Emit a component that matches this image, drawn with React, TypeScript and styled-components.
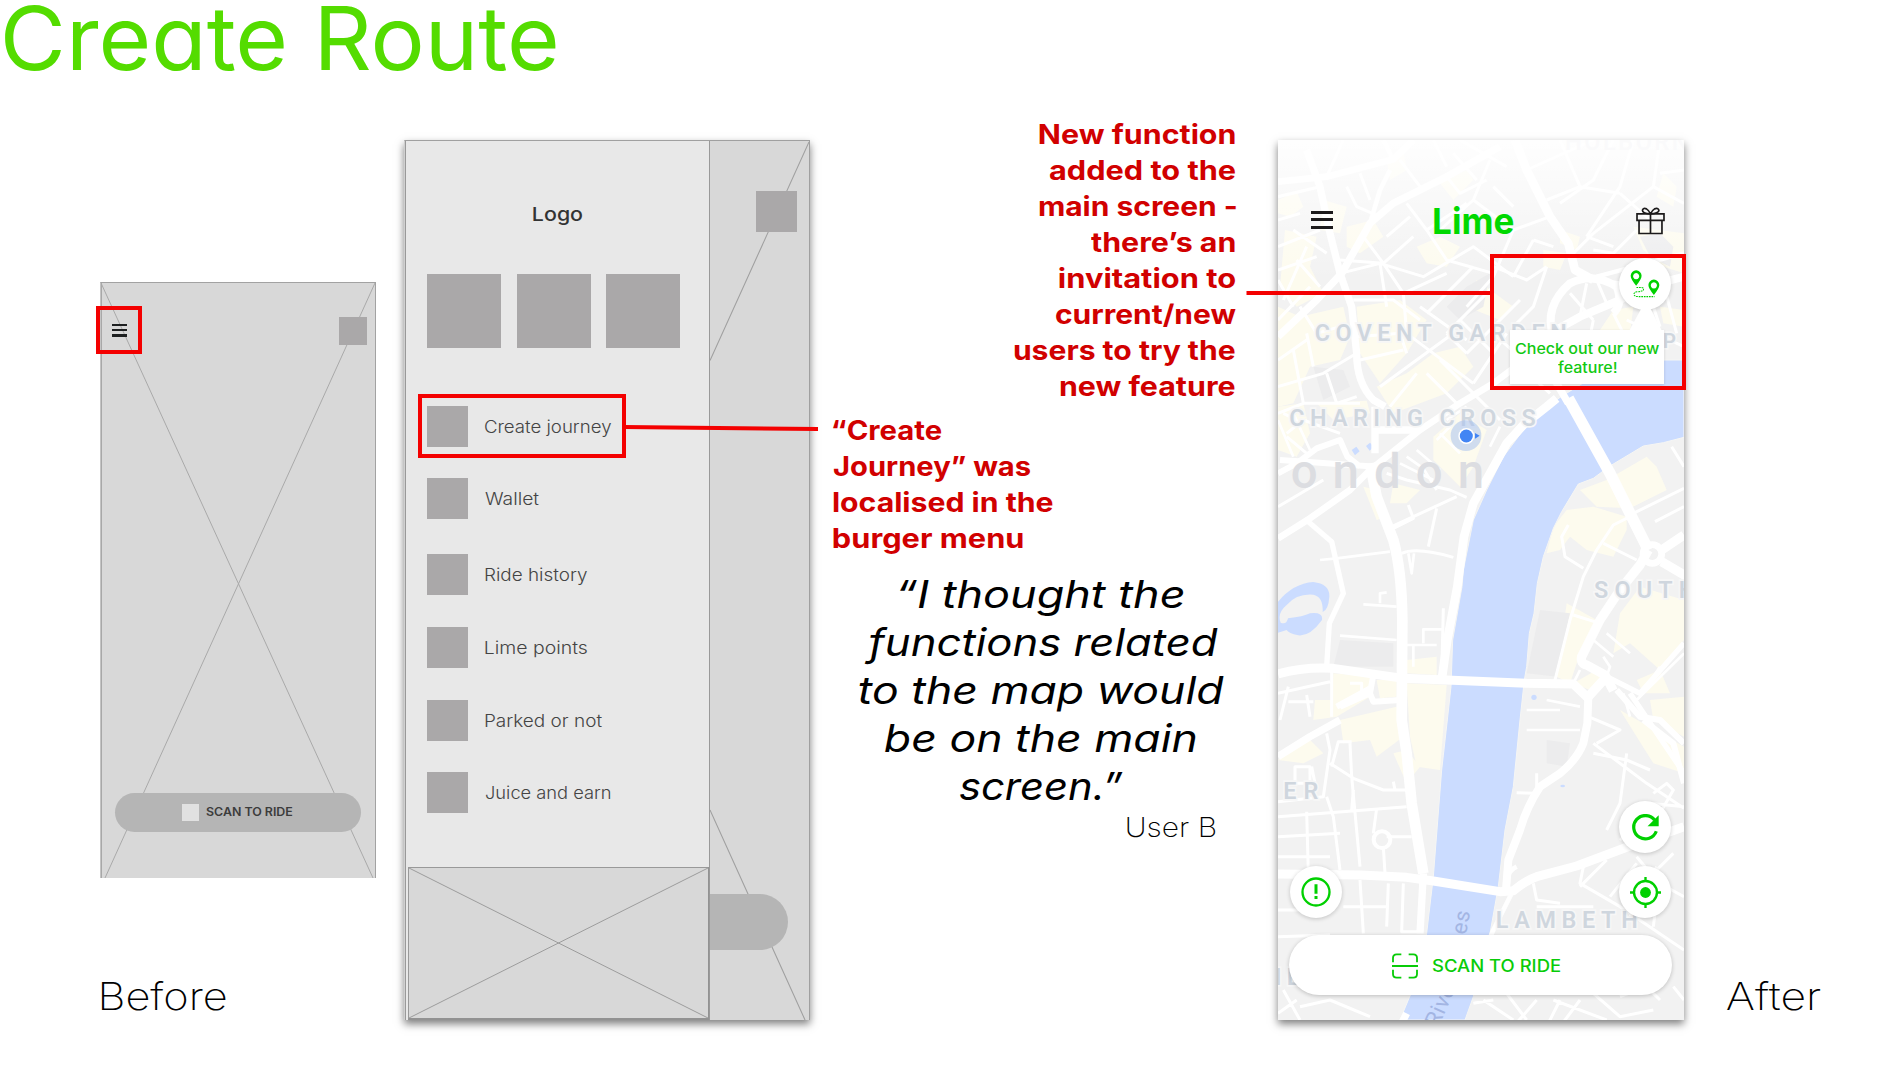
import React, { ReactNode, useLayoutEffect, useRef } from "react";
import styled, { createGlobalStyle } from "styled-components";

const RED = "#f40000";
const TEXT_RED = "#d10000";
const GREEN = "#00d000";
const LINE = "#a2a2a2";

const Global = createGlobalStyle`
  *, *::before, *::after { box-sizing: border-box; }
  body {
    margin: 0;
    background: #fff;
    font-family: Inter, "Open Sans", "Liberation Sans", sans-serif;
    overflow: hidden;
  }
`;

/* ---------- text set to an exact measure ---------- */

const Measure = styled.span<{ $w: number }>`
  display: block;
  flex: none;
  width: ${(p) => p.$w}px;
  white-space: nowrap;
`;

const Stretch = styled.span`
  display: inline-block;
  transform-origin: 0 50%;
`;

function Fit({ w, children }: { w: number; children: string }) {
  const ref = useRef<HTMLSpanElement>(null);
  useLayoutEffect(() => {
    const el = ref.current;
    if (!el) return;
    const cs = getComputedStyle(el);
    const ctx = document.createElement("canvas").getContext("2d");
    if (!ctx) return;
    ctx.font = `${cs.fontStyle} ${cs.fontWeight} ${cs.fontSize} ${cs.fontFamily}`;
    const m = ctx.measureText(children);
    const ink = m.actualBoundingBoxLeft + m.actualBoundingBoxRight;
    el.style.transform = `scaleX(${w / ink}) translateX(${m.actualBoundingBoxLeft}px)`;
  }, [w, children]);
  return (
    <Measure $w={w}>
      <Stretch ref={ref}>{children}</Stretch>
    </Measure>
  );
}

/* ---------- page frame ---------- */

const Page = styled.main`
  position: relative;
  width: 1900px;
  height: 1080px;
  display: flex;
  flex-direction: column;
  background: #fff;
  overflow: hidden;
`;

const Header = styled.header`
  height: 140px;
  flex: none;
  padding-left: 5px;
`;

const Title = styled.h1`
  margin: 0;
  font-size: 88px;
  line-height: 76px;
  font-weight: 400;
  color: #54dc00;
  font-feature-settings: "cv11", "ss03";
`;

const Stage = styled.div`
  display: flex;
  align-items: flex-start;
  height: 940px;
`;

const BeforeColumn = styled.section`
  width: 404px;
  padding: 142px 28px 0 100px;
`;

const Caption = styled.div`
  font-size: 38.5px;
  line-height: 48px;
  font-weight: 200;
  color: #000;
`;

const BeforeCaption = styled(Caption)`
  margin-top: 94px;
  padding-left: 2px;
`;

const AfterCaption = styled(Caption)`
  margin: 832px 0 0 43px;
`;

/* ---------- small wireframe ---------- */

const Wire = styled.div`
  position: relative;
  width: 276px;
  height: 596px;
  background: #d8d8d8;
  border-top: 1px solid ${LINE};
  border-right: 1px solid ${LINE};
  border-left: 1px solid #c4c4c4;
  box-shadow: inset 1px 0 0 #a8a8a8;
  display: flex;
  flex-direction: column;
  justify-content: space-between;
  padding: 34px 8px 46.5px 11px;
`;

const Cross = styled.svg`
  position: absolute;
  inset: 0;
  width: 100%;
  height: 100%;
`;

const WireTop = styled.div`
  position: relative;
  display: flex;
  justify-content: space-between;
  align-items: center;
`;

const Bars = styled.div<{ $w: number; $t: number; $gap: number; $c: string }>`
  width: ${(p) => p.$w}px;
  display: flex;
  flex-direction: column;
  gap: ${(p) => p.$gap}px;
  margin-bottom: 1.5px;
  &::before, &::after, i { content: ""; display: block; height: ${(p) => p.$t}px; background: ${(p) => p.$c}; }
`;

const Square = styled.div<{ $s: number; $c?: string }>`
  flex: none;
  width: ${(p) => p.$s}px;
  height: ${(p) => p.$s}px;
  background: ${(p) => p.$c || "#aaa8a9"};
`;

const WirePill = styled.div`
  position: relative;
  width: 246px;
  height: 38.5px;
  margin-left: 3px;
  border-radius: 20px;
  background: #b5b5b5;
  display: flex;
  align-items: center;
  padding-left: 67px;
  gap: 7px;
  font-size: 11.3px;
  line-height: 16px;
  font-weight: 600;
  color: #3c3c3c;
`;

function SmallWireframe() {
  return (
    <Wire>
      <Cross viewBox="0 0 274 595" preserveAspectRatio="none">
        <path d="M0 0L272 595M274 0L4 595" stroke="#a9a9a9" strokeWidth="1" fill="none" />
      </Cross>
      <WireTop>
        <Bars $w={15} $t={2.2} $gap={3} $c="#1d1f20"><i /></Bars>
        <Square $s={28} />
      </WireTop>
      <WirePill>
        <Square $s={16.5} $c="#e1e1e1" />
        <Fit w={87}>SCAN TO RIDE</Fit>
      </WirePill>
    </Wire>
  );
}

/* ---------- menu wireframe ---------- */

const Frame = styled.section`
  position: relative;
  flex: none;
  width: 406px;
  height: 880px;
  display: flex;
  box-shadow: 0 4px 8px rgba(0, 0, 0, 0.5);
`;

const MenuFrame = styled(Frame)`
  background: #d8d8d8;
  border-top: 1px solid #a0a0a0;
  border-right: 1px solid #a0a0a0;
  border-left: 1px solid #d0d0d0;
`;

const Drawer = styled.div`
  width: 305px;
  border-left: 1px solid #999;
  border-right: 1px solid #999;
  background: #e8e8e8;
  display: flex;
  flex-direction: column;
`;

const DrawerLogo = styled.div`
  padding: 62px 0 0 126.500px;
  height: 133.3px;
  font-size: 19px;
  line-height: 24px;
  font-weight: 550;
  color: #333;
`;

const Tiles = styled.div`
  display: flex;
  gap: 15.7px;
  padding-left: 21px;
  height: 131.5px;
`;

const MenuRow = styled.div<{ $h: number }>`
  display: flex;
  align-items: flex-start;
  gap: 17px;
  padding-left: 21px;
  height: ${(p) => p.$h}px;
  font-size: 17px;
  line-height: 42px;
  font-weight: 350;
  color: #444;
`;

const Placeholder = styled.div`
  position: relative;
  height: 153px;
  margin: auto 0 0 2px;
  border: 1px solid #999;
  border-bottom: 2px solid #929292;
  border-right: 1px solid #929292;
  background: #d8d8d8;
`;

const Peek = styled.div`
  position: relative;
  flex: 1;
  display: flex;
  flex-direction: column;
  justify-content: space-between;
  align-items: flex-start;
  padding: 50px 0 70px;
`;

const PeekSquare = styled(Square)`
  position: relative;
  margin-left: 46px;
`;

const PeekPill = styled.div`
  position: relative;
  width: 78px;
  height: 56px;
  border-radius: 0 28px 28px 0;
  background: #b5b5b5;
`;

const MENU: [string, number, number][] = [
  ["Create journey", 126, 72.7],
  ["Wallet", 54, 76],
  ["Ride history", 102, 72.5],
  ["Lime points", 102, 72.7],
  ["Parked or not", 117, 72.5],
  ["Juice and earn", 125.5, 41],
];

function MenuWireframe() {
  return (
    <MenuFrame>
      <Drawer>
        <DrawerLogo><Fit w={49.5}>Logo</Fit></DrawerLogo>
        <Tiles>
          <Square $s={74} /><Square $s={74} /><Square $s={74} />
        </Tiles>
        {MENU.map(([label, w, h]) => (
          <MenuRow key={label} $h={h}>
            <Square $s={41} />
            <Fit w={w}>{label}</Fit>
          </MenuRow>
        ))}
        <Placeholder>
          <Cross viewBox="0 0 300 150" preserveAspectRatio="none">
            <path d="M0 0L300 150M300 0L0 150" stroke="#9c9c9c" fill="none" />
          </Cross>
        </Placeholder>
      </Drawer>
      <Peek>
        <Cross viewBox="0 0 100 879" preserveAspectRatio="none">
          <path d="M100 1L0 219.5M0 669L96 879" stroke="#a0a0a0" strokeWidth="1.1" fill="none" />
        </Cross>
        <PeekSquare $s={41} />
        <PeekPill />
      </Peek>
    </MenuFrame>
  );
}

/* ---------- notes ---------- */

const Notes = styled.section`
  width: 468px;
  flex: none;
  padding-left: 22px;
  display: flex;
  flex-direction: column;
  color: ${TEXT_RED};
`;

const Note = styled.div<{ $end?: boolean }>`
  width: 403.5px;
  display: flex;
  flex-direction: column;
  align-items: ${(p) => (p.$end ? "flex-end" : "flex-start")};
  font-size: 27px;
  line-height: 36px;
  font-weight: 700;
`;

const NewNote = styled(Note)`
  margin-top: -23px;
`;

const OldNote = styled(Note)`
  margin: 8px 0 0 1px;
`;

const Quote = styled.blockquote`
  margin: 12.5px 0 0 19px;
  width: 380px;
  display: flex;
  flex-direction: column;
  align-items: center;
  font-size: 38.5px;
  line-height: 48px;
  font-style: italic;
  font-weight: 450;
  color: #000;
  font-feature-settings: "cv11";
`;

const Author = styled.div`
  margin: 0 0 0 294.5px;
  font-size: 27px;
  line-height: 36px;
  font-weight: 200;
  color: #000;
`;

/* ---------- map screen ---------- */

const Phone = styled(Frame)`
  flex-direction: column;
  background: #f2f2f2;
`;

const MapArt = styled.svg`
  position: absolute;
  inset: 0;
  width: 406px;
  height: 880px;
`;

const TopBar = styled.div`
  position: relative;
  display: flex;
  align-items: center;
  padding: 65px 19px 0 32.5px;
  height: 96px;
`;

const Brand = styled.div`
  margin: 0 auto 0 101px;
  font-size: 36px;
  line-height: 30px;
  font-weight: 650;
  color: #00d800;
`;

const Round = styled.div`
  position: relative;
  flex: none;
  width: 52px;
  height: 52px;
  border-radius: 50%;
  background: #fff;
  box-shadow: 0 1px 4px rgba(0, 0, 0, 0.2);
  display: flex;
  align-items: center;
  justify-content: center;
`;

const Feature = styled.div`
  position: relative;
  display: flex;
  flex-direction: column;
  align-items: flex-end;
  padding: 22px 13px 0 0;
`;

const Tooltip = styled.div`
  position: relative;
  width: 154px;
  height: 54px;
  margin: 20px 7px 0 0;
  background: #fff;
  box-shadow: 0 1px 3px rgba(0, 0, 0, 0.14);
  display: flex;
  flex-direction: column;
  align-items: center;
  padding-top: 9px;
  font-size: 15px;
  line-height: 19.3px;
  font-weight: 450;
  color: #12c912;
  &::before {
    content: "";
    position: absolute;
    right: 2px;
    top: -30px;
    border-left: 17px solid transparent;
    border-right: 16px solid transparent;
    border-bottom: 31px solid #fff;
  }
`;

const Controls = styled.div`
  position: relative;
  margin-top: auto;
  padding: 0 13px 17px 12px;
  display: flex;
  justify-content: space-between;
  align-items: flex-end;
`;

const Stack = styled.div`
  display: flex;
  flex-direction: column;
  gap: 13px;
`;

const ScanButton = styled.div`
  position: relative;
  width: 383px;
  height: 60px;
  margin: 0 0 25px 11px;
  border-radius: 30px;
  background: #fff;
  box-shadow: 0 1px 4px rgba(0, 0, 0, 0.22);
  display: flex;
  align-items: center;
  gap: 14px;
  padding: 1px 0 0 103px;
  font-size: 16.6px;
  line-height: 24px;
  font-weight: 550;
  color: #08cc08;
`;

const YELLOW = [
  "M54 240L110 215 130 260 90 290 54 280Z",
  "M75 330L170 350 150 440 190 520 110 560 60 500Z",
  "M190 240L260 260 240 340 180 330Z",
  "M260 320L340 300 370 350 300 400 260 380Z",
  "M54 560L120 590 250 560 270 650 240 720 150 740 100 850 54 860Z",
  "M290 560L420 540 500 600 440 700 360 790 300 700Z",
  "M350 800L440 760 520 700 600 680 640 740 560 820 400 880Z",
  "M470 380L540 350 600 380 560 440 500 430Z",
  "M540 190L620 150 640 180 580 240Z",
  "M650 480L760 560 720 600 620 560Z",
  "M850 390L920 400 900 450 850 440Z",
  "M900 330L960 350 950 390 900 370Z",
  "M1060 570L1120 560 1110 640 1020 630Z",
  "M1200 560L1272 570V620L1210 610Z",
  "M1120 320L1272 340V460L1210 440 1150 390Z",
  "M1210 160L1250 200 1240 260 1190 230Z",
  "M380 120L430 90 440 150 390 180Z",
  "M54 860L130 850 150 940 110 1010 54 990Z",
  "M170 850L320 842 330 880 220 900Z",
  "M520 950L600 880 680 930 640 1040 600 1100 520 1020Z",
  "M310 1100L350 1110 380 1190 350 1200Z",
  "M400 1090L480 1110 440 1150 390 1150Z",
  "M960 1110L1040 1080 1160 1010 1190 1040 1220 1110 1110 1165 1010 1160Z",
  "M920 1170L1000 1160 1100 1190 1100 1230 1060 1310 980 1290 930 1250 900 1290 860 1300 880 1220Z",
  "M1140 1400L1272 1440V1560L1200 1650 1110 1570 1060 1600 1080 1480Z",
  "M920 1450L1010 1500 960 1600 930 1690 890 1670Z",
  "M840 1490L905 1500V1520L840 1510ZM840 1525L900 1535V1550L840 1540ZM830 1605L870 1610V1640L830 1635Z",
  "M220 1660L330 1670 330 1730 230 1790 160 1800 165 1740 215 1740Z",
  "M350 1680L410 1680V1730L360 1735Z",
  "M440 1620L530 1610V1665L440 1660Z",
  "M440 1690L560 1695 540 1950 470 1940 450 1850Z",
  "M240 1800L410 1760 430 1850 350 1910 330 1860 250 1870Z",
  "M54 1920L150 1860 190 1900 130 1930Z",
  "M400 1900L440 1890 480 1940 440 1990Z",
  "M1130 1680L1200 1650 1230 1720 1150 1720Z",
  "M1080 1770L1272 1880V1960L1180 1930 1130 1850Z",
  "M1170 1740L1272 1730V1850L1180 1800Z",
  "M940 1690L1010 1650 1030 1690 990 1710Z",
];

const GREY = [
  "M620 500L690 460 670 560 600 600 560 560Z",
  "M1140 350L1200 340 1240 380 1230 440 1170 410Z",
  "M240 1560L400 1570 400 1640 220 1640Z",
  "M840 1470L930 1480 890 1670 800 1660Z",
  "M860 1860L930 1870 920 1940 860 1930Z",
  "M160 740L250 750 270 800 190 840Z",
];

const RIVER =
  "M828 885L903 830L1000 770L1212 720H1272V952L1210 968L1150 978L1050 1038L1000 1075L955 1092L905 1175L880 1225L850 1310L832 1390L822 1480L808 1540L800 1640L793 1680L780 1800L760 2000L735 2130L715 2300L690 2440L640 2630L615 2700H420L455 2615L500 2440L520 2270L545 1950L562 1800L573 1700L578 1560L606 1400L610 1350L640 1200L680 1110L730 1010L790 930Z";

const ROADS: [number, string][] = [
  [26, "M890 835L860 860 790 915 740 970 690 1060 640 1150 612 1250 592 1400 562 1560 545 1680"],
  [34, "M925 835L1050 1060 1165 1290"],
  [22, "M925 850L890 790 850 730"],
  [27, "M54 1662Q130 1640 220 1645L430 1675 800 1690 940 1692 985 1735"],
  [27, "M54 2262L300 2265 440 2272 520 2283 720 2315 760 2312Q800 2280 830 2270L950 2238 1100 2182 1272 2120"],
  [32, "M330 1030L350 1130 400 1260Q425 1350 427 1500L425 1800 440 1900 455 2050 490 2260"],
  [22, "M490 2260L480 2440M440 2680L410 2740"],
  [28, "M1165 1290L1140 1335 1080 1410 1020 1500 965 1610Q960 1630 980 1635L1035 1665 1060 1712"],
  [24, "M985 1730L982 1810 970 1870Q950 1920 900 1960L840 2000Q800 2060 780 2130L745 2220 738 2310"],
  [28, "M1205 1290L1272 1245M1205 1325L1290 1375M985 1730L1040 1670"],
  [20, "M54 1255L150 1195 270 1110 330 1050 480 930 600 850 700 790 780 730 900 620"],
  [18, "M54 1060L110 1030 170 985 240 960 262 1010 300 1040M60 1020L350 1040"],
  [16, "M145 1205L215 1265 250 1420 208 1510 200 1640"],
  [22, "M345 860V1000M345 930L480 930"],
  [20, "M54 185L200 170 400 118 460 60"],
  [26, "M765 60L800 150 870 290 925 370 945 450 1000 480"],
  [22, "M140 90L180 200 210 340 240 460 275 560 290 700Q290 790 340 840L375 860"],
  [22, "M54 650L170 540 245 460 330 310 400 250 560 170 720 80"],
  [24, "M880 650Q850 560 930 490Q1000 455 1070 500Q1090 550 1060 580"],
  [24, "M760 745L870 640 960 590 1080 540 1160 500 1272 470"],
  [13, "M990 480L1080 490M1010 470L1272 400"],
  [14, "M330 310L360 210 390 150M400 120L370 60"],
  [16, "M1040 1670L1140 1720 1272 1570M1110 1720L1272 1960"],
  [18, "M1272 1870L1200 1800 1140 1790 1070 1710M1150 1800L1240 1870 1272 1990"],
  [22, "M54 1910L150 1850 240 1800"],
  [18, "M240 1760L330 1720 340 1665M330 1720L340 1745 420 1740M230 1760L330 1705"],
  [14, "M760 2310L700 2430 670 2500M770 2240Q730 2260 745 2310"],
];

const MINOR: [number, string][] = [
  [9, "M620 1132L570 1110 440 1080 380 1060M395 1220L590 1130M400 1225L460 1195 445 1155M530 1165L505 1280M425 1300Q470 1280 580 1312"],
  [8, "M180 1320L230 1315 390 1295M240 1547L410 1560M310 1453L410 1460M360 1450V1420L380 1417M490 1570V1528H550M440 1575H530M460 1575V1640M445 1300L455 1360 462 1300"],
  [9, "M545 1670L550 1465M1030 1270L1130 1320M1110 1190L1060 1215 1010 1290 970 1370 930 1500 885 1680M940 1485L1020 1510M970 1345L915 1310 905 1250 925 1215M1100 1190L1272 1105M1185 1205L1272 1160M1235 980L1272 1040"],
  [9, "M54 1720L210 1685M85 1700L60 1800M85 1745H160M140 1725L150 1790M215 1650V1790M270 1690H305V1730M54 1160L190 1080M80 950L140 1000M110 900L70 880"],
  [9, "M54 2045L190 2030 210 1890 200 1840M54 2090L440 2060M140 2075L145 2260M200 2030L220 2090 240 2250M270 1870L275 1970 300 2240M210 1930L280 1975 370 2010 440 2010M215 1940L235 1865H275M400 1985L405 2010M54 2210H210M370 2180L375 2260M455 2150H380M340 2140L350 2065M54 2370H210M54 2450L210 2445M385 2290L380 2420M300 2280L310 2440M250 2360H380M430 2290L425 2435H480"],
  [9, "M105 1990H150V1940H105ZM155 1940L165 1990M280 2010L275 2070M54 2150L240 2140"],
  [9, "M1000 1870L1160 1990 1272 2065M1080 2160L1170 2080M985 1790L1080 1830 1010 1870M1000 1900L1100 1920 1170 1950M1100 1900L1080 2050 1040 2130M1272 2060L1170 2050M830 1960V2020L770 2018M1180 2020L1220 1990 1240 2010 1200 2080"],
  [9, "M970 2240L960 2290 1080 2360 1272 2490M960 2300L1040 2220M1050 2330L1130 2230M1110 2390L1190 2240M820 2290L830 2340 900 2350M830 2360H1000M1180 2280L1272 2330M1200 2260L1180 2420M1240 2200L1190 2250M1130 2210L1180 2270"],
  [9, "M70 2610L120 2700M120 2660L210 2640 330 2690M54 2680L110 2640M670 2640L760 2700M740 2620L800 2700M830 2640L760 2720M900 2640L860 2720M960 2640L900 2720M1000 2620L1080 2690 1180 2670M1080 2630L1160 2600 1200 2640M880 2640L1040 2700M1240 2600L1272 2640M640 2650L700 2640"],
  [9, "M54 230L180 200M200 170L250 60M260 200L290 260 360 290M300 160L330 240M420 120L480 200M560 170L600 220 680 180M580 100L650 180M520 60L560 140M600 60L740 140M690 120L640 240 540 330M440 250L500 330 620 250M500 330L560 420 700 460M380 350L450 290M640 240L760 330 870 290M760 330L700 470 620 560M700 200L760 260"],
  [9, "M240 460L360 430 490 470 640 380 760 470M360 430L380 560M370 430L310 350M370 430L460 350M370 430L430 520 560 460M370 430L240 420M430 520L440 640M500 580L640 440M560 640L700 500M620 700L780 540M560 640L620 700M480 560L620 660M280 540L400 540 480 600M290 650L420 640 440 700M300 720L430 690M440 640L640 790M360 800L580 640M640 790L740 640M500 760L600 860M390 860L470 760M540 720L640 820M600 600L700 700M700 640L800 730"],
  [9, "M54 300L120 280M100 330L200 400M54 380L180 330M54 450L170 410M70 540L140 380M54 600L150 500M110 420L180 500M54 480L100 560M120 560L170 640 240 620M54 720L140 660M140 640L160 740M54 800L190 760 290 700M200 760L230 850 290 830M54 880L130 850 300 850M100 690L130 850M80 940L130 900 240 940"],
  [9, "M800 150L1000 60M900 60L960 200 860 240M1060 60L1000 180 900 250M960 200L1080 220M1120 60L1080 200 980 350M1200 60L1180 200 1000 340M1000 340L940 400M980 350L1060 380M1080 220L1170 300M1180 200L1272 250M1130 330L1060 400 1000 390M1272 150L1200 160"],
  [9, "M980 490L960 590M1010 480L1040 550M930 520L1000 600M860 440L800 480 700 440M860 440L820 560 760 620M820 360L760 470M880 380L820 360M1060 580L1120 700M1160 500L1200 620M1210 490L1250 640M1000 600L980 700M1100 600L1272 680M900 640L960 720M760 720L870 820M800 680L900 780M640 820L720 900"],
  [8, "M440 1010L490 1045 530 1110M420 1030L520 1080M470 990L540 1050M540 940L600 1000M530 960L580 910M620 860L560 900M690 980L720 920M54 900L100 1010M100 880L150 990"],
  [8, "M1000 1560L1060 1610M1040 1540L1110 1600M1272 1600L1130 1740M1200 1640L1160 1700M1030 1610L1050 1640 1040 1670M800 1770H900M860 1740L960 1760M800 1830H960M940 1690L960 1650M1090 1720L1110 1790"],
];

interface LabelProps {
  x: number;
  y: number;
  w: number;
  size?: number;
  weight?: number;
  fill?: string;
  halo?: number;
  children: string;
}

function MapLabel({ x, y, w, size = 70, weight = 600, fill = "#cfd6de", halo = 10, children }: LabelProps) {
  return (
    <text
      x={x} y={y} fontFamily="Roboto, sans-serif" fontWeight={weight} fontSize={size} fill={fill}
      textLength={w} lengthAdjust="spacing"
      stroke={halo ? "#f7f7f7" : "none"} strokeWidth={halo} paintOrder="stroke"
    >
      {children}
    </text>
  );
}

function LondonMap() {
  return (
    <MapArt viewBox="54 60 1218 2640" preserveAspectRatio="none">
      <defs>
        <linearGradient id="haze" x1="0" y1="0" x2="0" y2="1">
          <stop offset="0" stopColor="#fff" stopOpacity="0.95" />
          <stop offset="0.45" stopColor="#fff" stopOpacity="0.5" />
          <stop offset="1" stopColor="#fff" stopOpacity="0" />
        </linearGradient>
      </defs>
      <rect x="54" y="60" width="1218" height="2640" fill="#f2f2f2" />
      <g fill="#fdfbee">{YELLOW.map((d) => <path key={d} d={d} />)}</g>
      <g fill="#ececed">{GREY.map((d) => <path key={d} d={d} />)}</g>
      <g fill="none" stroke="#fff" strokeLinejoin="round">
        {MINOR.map(([w, d]) => <path key={d} d={d} strokeWidth={w} />)}
      </g>
      <path d={RIVER} fill="#cbdcff" stroke="#f6f6f4" strokeWidth="3" />
      <g fill="#cbdcff">
        <path d="M54 1445Q100 1390 160 1386Q210 1392 208 1430Q205 1470 188 1476Q190 1430 160 1424Q110 1420 80 1455Q50 1480 62 1508Q80 1515 84 1495Q130 1490 150 1480Q190 1475 186 1500Q150 1550 115 1546Q85 1540 80 1530L54 1538Z" />
        <path d="M275 990l14 -10 10 14 -14 12zM318 978l12 -10 11 12 -12 12z" />
        <circle cx="822" cy="1732" r="8" />
        <ellipse cx="908" cy="1998" rx="7" ry="4" />
      </g>
      <g fill="none" stroke="#fff" strokeLinejoin="round">
        {ROADS.map(([w, d]) => <path key={d} d={d} strokeWidth={w} />)}
        <circle cx="1177" cy="1302" r="28" strokeWidth="20" />
        <circle cx="366" cy="2159" r="25" strokeWidth="12" />
      </g>
      <rect x="54" y="60" width="1218" height="420" fill="url(#haze)" />
      <MapLabel x={915} y={90} w={370} weight={500} fill="#fafafb" halo={0}>HOLBORN</MapLabel>
      <MapLabel x={164} y={662} w={756}>COVENT GARDEN</MapLabel>
      <MapLabel x={1208} y={685} w={110} size={62}>PL</MapLabel>
      <MapLabel x={88} y={917} w={739}>CHARING CROSS</MapLabel>
      <MapLabel x={92} y={1105} w={580} size={142} weight={500} fill="#dcdde1" halo={0}>ondon</MapLabel>
      <MapLabel x={1002} y={1433} w={304}>SOUTH</MapLabel>
      <MapLabel x={70} y={2037} w={105}>ER</MapLabel>
      <MapLabel x={707} y={2424} w={426}>LAMBETH</MapLabel>
      <MapLabel x={44} y={2594} w={74}>IL</MapLabel>
      <g fill="#a3b5e3" fontFamily="Roboto, sans-serif" fontSize="66" letterSpacing="2">
        <text transform="translate(534 2725) rotate(-66)">River</text>
        <text transform="translate(601 2542) rotate(-80)">ames</text>
      </g>
      <circle cx="618" cy="947" r="46" fill="#a9c3ee" fillOpacity="0.55" />
      <circle cx="619" cy="948" r="24" fill="#fff" />
      <circle cx="619" cy="948" r="19.5" fill="#4285f4" />
      <path d="M645 939L659 947L645 956Z" fill="#4285f4" />
    </MapArt>
  );
}

const GiftIcon = () => (
  <svg width="29" height="28" viewBox="0 0 86 82" fill="none" stroke="#1c1a1b" strokeWidth="5">
    <path d="M3 20H83V39H3ZM9 39V78H77V39M43 20V78" />
    <path d="M43 20Q18 18 19 9Q22 1 31 5Q38 9 43 20Q48 9 55 5Q65 1 68 9Q68 18 43 20" />
  </svg>
);

const RouteIcon = () => (
  <svg width="30" height="28" viewBox="0 0 88 82">
    <g fill={GREEN} fillRule="evenodd">
      <path d="M18 46Q2 27 2 17A16 16 0 0 1 34 17Q34 27 18 46ZM18 9a9 9 0 1 0 .1 0Z" />
      <path d="M70 73Q54 54 54 44A16 16 0 0 1 86 44Q86 54 70 73ZM70 36a9 9 0 1 0 .1 0Z" />
    </g>
    <path d="M19 51H34Q42 52 39 59Q36 63 20 64Q10 66 12 73Q14 78 24 78H72" fill="none" stroke={GREEN} strokeWidth="3" strokeDasharray="5 2.5" />
  </svg>
);

const RefreshIcon = () => (
  <svg width="27" height="27" viewBox="0 0 80 80">
    <path d="M67 18A34.5 34.5 0 1 0 72 51" fill="none" stroke={GREEN} strokeWidth="9.5" />
    <path d="M79 4V36H46Z" fill={GREEN} />
  </svg>
);

const LocateIcon = () => (
  <svg width="31" height="31" viewBox="0 0 92 92" fill="none" stroke={GREEN} strokeWidth="7">
    <circle cx="46" cy="46" r="34" />
    <circle cx="46" cy="46" r="16" fill={GREEN} stroke="none" />
    <path d="M46 0V12M46 80V92M0 46H12M80 46H92" />
  </svg>
);

const AlertIcon = () => (
  <svg width="30" height="30" viewBox="0 0 90 90" fill="none" stroke={GREEN}>
    <circle cx="45" cy="45" r="40.5" strokeWidth="7" />
    <path d="M45 22V50M45 57V66" strokeWidth="9" />
  </svg>
);

const ScanIcon = () => (
  <svg width="26" height="26" viewBox="0 0 78 78" fill="none" stroke="#08cc08" strokeWidth="5.5">
    <path d="M3 28V15Q3 4 14 4H28M50 4H64Q75 4 75 15V28M3 50V63Q3 74 14 74H28M50 74H64Q75 74 75 63V50M0 39H78" />
  </svg>
);

function MapScreen() {
  return (
    <Phone>
      <LondonMap />
      <TopBar>
        <Bars $w={22} $t={3.3} $gap={4.3} $c="#1c1a1b"><i /></Bars>
        <Brand><Fit w={80}>Lime</Fit></Brand>
        <GiftIcon />
      </TopBar>
      <Feature>
        <Round><RouteIcon /></Round>
        <Tooltip>
          <Fit w={145}>Check out our new</Fit>
          <Fit w={59}>feature!</Fit>
        </Tooltip>
      </Feature>
      <Controls>
        <Round><AlertIcon /></Round>
        <Stack>
          <Round><RefreshIcon /></Round>
          <Round><LocateIcon /></Round>
        </Stack>
      </Controls>
      <ScanButton>
        <ScanIcon />
        <Fit w={128}>SCAN TO RIDE</Fit>
      </ScanButton>
    </Phone>
  );
}

/* ---------- red call-outs drawn over the screens ---------- */

const Highlight = styled.div<{ $x: number; $y: number; $w: number; $h: number }>`
  position: absolute;
  left: ${(p) => p.$x}px;
  top: ${(p) => p.$y}px;
  width: ${(p) => p.$w}px;
  height: ${(p) => p.$h}px;
  border: 4px solid ${RED};
`;

const Connectors = styled.svg`
  position: absolute;
  inset: 0;
  pointer-events: none;
`;

const lines = (items: [string, number][]): ReactNode =>
  items.map(([t, w]) => <Fit key={t} w={w}>{t}</Fit>);

export default function App() {
  return (
    <>
      <Global />
      <Page>
        <Header>
          <Title><Fit w={546.5}>Create Route</Fit></Title>
        </Header>
        <Stage>
          <BeforeColumn>
            <SmallWireframe />
            <BeforeCaption><Fit w={124.5}>Before</Fit></BeforeCaption>
          </BeforeColumn>
          <MenuWireframe />
          <Notes>
            <NewNote $end>
              {lines([
                ["New function", 196.5], ["added to the", 187], ["main screen -", 197], ["there’s an", 144.5],
                ["invitation to", 176.5], ["current/new", 180], ["users to try the", 221.5], ["new feature", 175.5],
              ])}
            </NewNote>
            <OldNote>
              {lines([["“Create", 109], ["Journey” was", 198], ["localised in the", 220.5], ["burger menu", 190.5]])}
            </OldNote>
            <Quote>
              {lines([
                ["“I thought the", 283], ["functions related", 354], ["to the map would", 365],
                ["be on the main", 312], ["screen.”", 163],
              ])}
            </Quote>
            <Author><Fit w={88.5}>User B</Fit></Author>
          </Notes>
          <MapScreen />
          <AfterCaption><Fit w={94}>After</Fit></AfterCaption>
        </Stage>
        <Highlight $x={96} $y={306} $w={46} $h={48} />
        <Highlight $x={418} $y={394} $w={208} $h={64} />
        <Highlight $x={1490} $y={254} $w={196} $h={136} />
        <Connectors width="1900" height="1080">
          <path d="M624 427L818 429M1246.5 293H1492" stroke={RED} strokeWidth="4" fill="none" />
        </Connectors>
      </Page>
    </>
  );
}
